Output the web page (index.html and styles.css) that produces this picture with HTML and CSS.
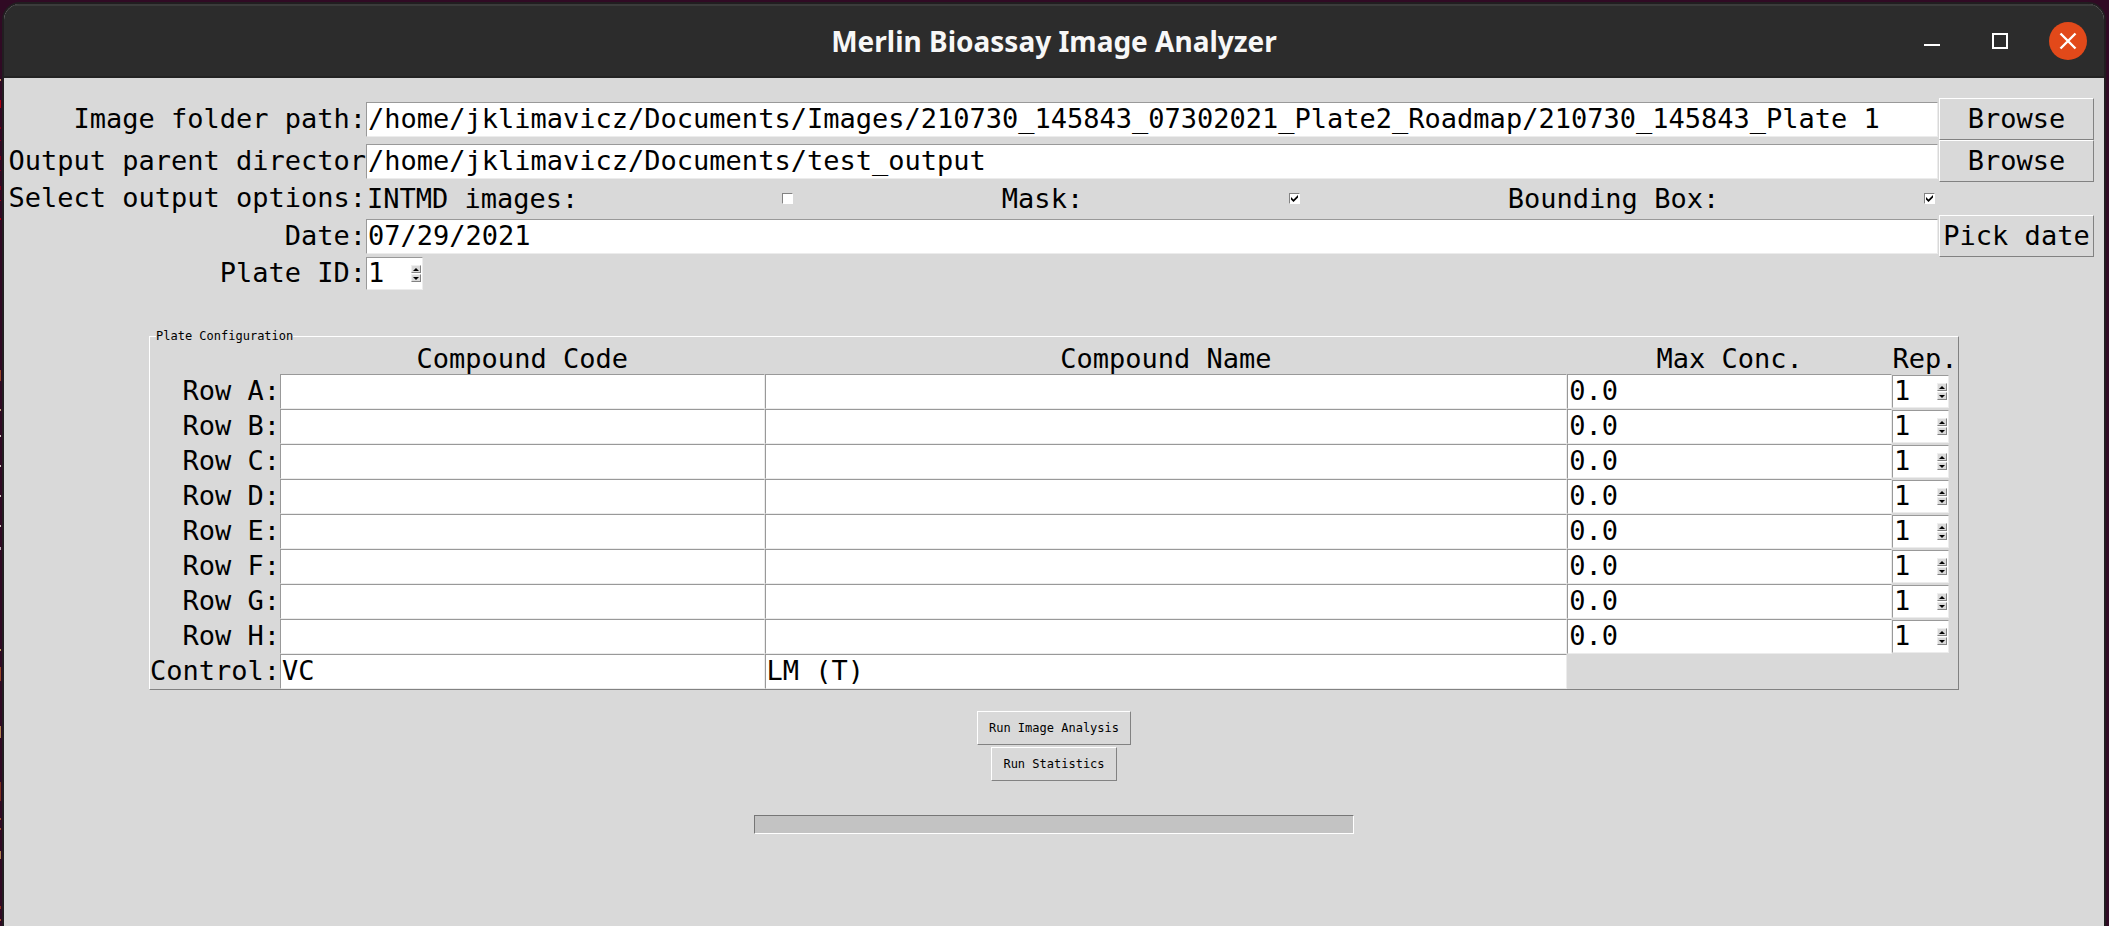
FILE: index.html
```
<!DOCTYPE html>
<html lang="en">
<head>
<meta charset="utf-8">
<title>Merlin Bioassay Image Analyzer</title>
<link rel="stylesheet" href="styles.css">
</head>
<body class="desktop">
<div class="window">
  <header class="titlebar">
    <h1 class="title">Merlin Bioassay Image Analyzer</h1>
    <div class="window-controls">
      <button class="wm" type="button" aria-label="Minimize"><svg width="38" height="38" viewBox="0 0 38 38"><path d="M11 23h16" stroke="#fff" stroke-width="2"/></svg></button>
      <button class="wm" type="button" aria-label="Maximize"><svg width="38" height="38" viewBox="0 0 38 38"><path d="M12 12h14v14h-14z" fill="none" stroke="#fff" stroke-width="2"/></svg></button>
      <button class="wm wm-close" type="button" aria-label="Close"><svg width="38" height="38" viewBox="0 0 38 38"><path d="M11.500 11.500l15 15M26.500 11.500l-15 15" stroke="#fff" stroke-width="2.400"/></svg></button>
    </div>
  </header>
  <main class="content">
    <form class="settings">
      <label class="field-label" for="folder">Image folder path:</label>
      <input class="entry" id="folder" type="text" value="/home/jklimavicz/Documents/Images/210730_145843_07302021_Plate2_Roadmap/210730_145843_Plate 1">
      <button class="btn" type="button">Browse</button>

      <label class="field-label" for="output">Output parent director</label>
      <input class="entry" id="output" type="text" value="/home/jklimavicz/Documents/test_output">
      <button class="btn" type="button">Browse</button>

      <span class="field-label">Select output options:</span>
      <div class="options">
        <div class="option option-first"><label for="intmd">INTMD images:</label><input class="check" id="intmd" type="checkbox"></div>
        <div class="option"><label for="mask">Mask:</label><input class="check" id="mask" type="checkbox" checked></div>
        <div class="option"><label for="bbox">Bounding Box:</label><input class="check" id="bbox" type="checkbox" checked></div>
      </div>
      <span></span>

      <label class="field-label" for="date">Date:</label>
      <input class="entry" id="date" type="text" value="07/29/2021">
      <button class="btn" type="button">Pick date</button>

      <label class="field-label" for="plate">Plate ID:</label>
      <span class="spin"><input id="plate" type="number" value="1"><span class="arrows"><button class="up" type="button" aria-label="Increase"></button><button class="down" type="button" aria-label="Decrease"></button></span></span>
    </form>

    <fieldset class="plate">
      <legend>Plate Configuration</legend>
      <table class="plate-table">
        <colgroup><col class="col-row"><col class="col-code"><col class="col-name"><col class="col-conc"><col class="col-rep"></colgroup>
        <thead><tr><td></td><th scope="col">Compound Code</th><th scope="col">Compound Name</th><th scope="col">Max Conc.</th><th scope="col">Rep.</th></tr></thead>
        <tbody>
          <tr><th scope="row">Row A:</th><td><input class="entry" type="text" aria-label="Row A code"></td><td><input class="entry" type="text" aria-label="Row A name"></td><td><input class="entry" type="text" aria-label="Row A max conc." value="0.0"></td><td><span class="spin"><input type="number" aria-label="Row A rep." value="1"><span class="arrows"><button class="up" type="button" aria-label="Increase"></button><button class="down" type="button" aria-label="Decrease"></button></span></span></td></tr>
          <tr><th scope="row">Row B:</th><td><input class="entry" type="text" aria-label="Row B code"></td><td><input class="entry" type="text" aria-label="Row B name"></td><td><input class="entry" type="text" aria-label="Row B max conc." value="0.0"></td><td><span class="spin"><input type="number" aria-label="Row B rep." value="1"><span class="arrows"><button class="up" type="button" aria-label="Increase"></button><button class="down" type="button" aria-label="Decrease"></button></span></span></td></tr>
          <tr><th scope="row">Row C:</th><td><input class="entry" type="text" aria-label="Row C code"></td><td><input class="entry" type="text" aria-label="Row C name"></td><td><input class="entry" type="text" aria-label="Row C max conc." value="0.0"></td><td><span class="spin"><input type="number" aria-label="Row C rep." value="1"><span class="arrows"><button class="up" type="button" aria-label="Increase"></button><button class="down" type="button" aria-label="Decrease"></button></span></span></td></tr>
          <tr><th scope="row">Row D:</th><td><input class="entry" type="text" aria-label="Row D code"></td><td><input class="entry" type="text" aria-label="Row D name"></td><td><input class="entry" type="text" aria-label="Row D max conc." value="0.0"></td><td><span class="spin"><input type="number" aria-label="Row D rep." value="1"><span class="arrows"><button class="up" type="button" aria-label="Increase"></button><button class="down" type="button" aria-label="Decrease"></button></span></span></td></tr>
          <tr><th scope="row">Row E:</th><td><input class="entry" type="text" aria-label="Row E code"></td><td><input class="entry" type="text" aria-label="Row E name"></td><td><input class="entry" type="text" aria-label="Row E max conc." value="0.0"></td><td><span class="spin"><input type="number" aria-label="Row E rep." value="1"><span class="arrows"><button class="up" type="button" aria-label="Increase"></button><button class="down" type="button" aria-label="Decrease"></button></span></span></td></tr>
          <tr><th scope="row">Row F:</th><td><input class="entry" type="text" aria-label="Row F code"></td><td><input class="entry" type="text" aria-label="Row F name"></td><td><input class="entry" type="text" aria-label="Row F max conc." value="0.0"></td><td><span class="spin"><input type="number" aria-label="Row F rep." value="1"><span class="arrows"><button class="up" type="button" aria-label="Increase"></button><button class="down" type="button" aria-label="Decrease"></button></span></span></td></tr>
          <tr><th scope="row">Row G:</th><td><input class="entry" type="text" aria-label="Row G code"></td><td><input class="entry" type="text" aria-label="Row G name"></td><td><input class="entry" type="text" aria-label="Row G max conc." value="0.0"></td><td><span class="spin"><input type="number" aria-label="Row G rep." value="1"><span class="arrows"><button class="up" type="button" aria-label="Increase"></button><button class="down" type="button" aria-label="Decrease"></button></span></span></td></tr>
          <tr><th scope="row">Row H:</th><td><input class="entry" type="text" aria-label="Row H code"></td><td><input class="entry" type="text" aria-label="Row H name"></td><td><input class="entry" type="text" aria-label="Row H max conc." value="0.0"></td><td><span class="spin"><input type="number" aria-label="Row H rep." value="1"><span class="arrows"><button class="up" type="button" aria-label="Increase"></button><button class="down" type="button" aria-label="Decrease"></button></span></span></td></tr>
          <tr><th scope="row">Control:</th><td><input class="entry" type="text" aria-label="Control code" value="VC"></td><td><input class="entry" type="text" aria-label="Control name" value="LM (T)"></td><td></td><td></td></tr>
        </tbody>
      </table>
    </fieldset>

    <div class="actions">
      <button class="btn btn-small" type="button">Run Image Analysis</button>
      <button class="btn btn-small" type="button">Run Statistics</button>
    </div>
    <progress class="progress" value="0" max="100" aria-label="Progress"></progress>
  </main>
</div>
</body>
</html>
```
FILE: styles.css
```
* { box-sizing: border-box; }

.desktop {
  margin: 0;
  min-height: 100vh;
  display: flex;
  padding: 2px 3px 0 2px;
  background-color: #300a24;
  /* slivers of the terminal text behind the window */
  background-image: linear-gradient(#0000 79px, #c08a60 79px 81px, #0000 81px 100px, #b00010 100px 108px, #0000 108px 127px, #80001a 127px 129px, #0000 129px 140px, #80001a 140px 141px, #0000 141px 156px, #80001a 156px 160px, #0000 160px 170px, #80001a 170px 171px, #0000 171px 186px, #80001a 186px 190px, #0000 190px 200px, #a00010 200px 201px, #0000 201px 218px, #b00010 218px 220px, #0000 220px 370px, #984528 370px 381px, #0000 381px 409px, #c0a080 409px 411px, #0000 411px 435px, #d0c8c0 435px 437px, #0000 437px 465px, #d0c8c0 465px 467px, #0000 467px 495px, #d0c8c0 495px 497px, #0000 497px 525px, #d0c8c0 525px 527px, #0000 527px 547px, #b8a8b0 547px 550px, #0000 550px 649px, #c0a060 649px 651px, #0000 651px 667px, #984528 667px 681px, #0000 681px 726px, #b08050 726px 738px, #0000 738px 782px, #803020 782px 801px, #0000 801px 818px, #a05030 818px 820px, #0000 820px 828px, #a05030 828px 830px, #0000 830px 851px, #b08050 851px 859px, #0000 859px 906px, #903020 906px 909px, #0000 909px 919px, #a05030 919px 921px, #0000 921px);
  background-size: 1px 100%;
  background-repeat: no-repeat;
  font-family: "DejaVu Sans Mono", "Liberation Mono", monospace;
  font-size: 27px;
  color: #000;
}

.window {
  flex: 1;
  display: flex;
  flex-direction: column;
  border: 2px solid #211d20;
  border-bottom: 0;
  border-radius: 18px 18px 0 0;
  overflow: hidden;
  background: #d9d9d9;
}

.titlebar {
  display: grid;
  grid-template-columns: 1fr auto 1fr;
  align-items: center;
  height: 74px;
  padding: 0 17px;
  background: #2c2c2c;
  border-top: 2px solid #3b3b3b;
  border-bottom: 2px solid #232323;
}

.title {
  grid-column: 2;
  margin: 0;
  font: 700 28px/36px "Noto Sans", "Open Sans", sans-serif;
  color: #f7f7f7;
}

.window-controls { display: flex; justify-content: flex-end; gap: 30px; }

.wm {
  width: 38px;
  height: 38px;
  padding: 0;
  border: 0;
  border-radius: 50%;
  background: none;
}

.wm svg { display: block; }
.wm-close { background: #e2491a; }

.content { flex: 1; padding: 20px 10px 0; }

.settings {
  display: grid;
  grid-template-columns: 352px 1fr 156px;
  align-items: center;
}

.field-label {
  display: flex;
  justify-content: flex-end;
  padding-bottom: 2px;
  white-space: nowrap;
  line-height: 31px;
}

.entry {
  display: block;
  width: 100%;
  height: 35px;
  padding: 0 1px 2px;
  border: 1px solid;
  border-color: #999 #ececec #ececec #999;
  border-radius: 0;
  background: #fff;
  font: inherit;
  color: inherit;
}

.btn {
  height: 42px;
  margin-left: 1px;
  padding: 0 0 2px;
  border: 1px solid;
  border-color: #fff #828282 #828282 #fff;
  border-radius: 0;
  background: #d9d9d9;
  font: inherit;
  color: inherit;
  white-space: nowrap;
}

.options {
  display: grid;
  grid-template-columns: 430fr 507fr 635fr;
  line-height: 33px;
}

.option { display: flex; align-items: center; padding-right: 3px; }
.option label { flex: 1; text-align: center; }
.option-first label { text-align: left; padding-left: 1px; }

.check {
  appearance: none;
  width: 11px;
  height: 11px;
  margin: 0;
  border: 1px solid;
  border-color: #828282 #fff #fff #828282;
  background: #fff;
}

.check:checked {
  background: #fff url("data:image/svg+xml,%3Csvg xmlns='http://www.w3.org/2000/svg' viewBox='0 0 9 9'%3E%3Cpath d='M1 3l2.500 2.500L8 1v2.500L3.500 8 1 5.500z'/%3E%3C/svg%3E") center / 9px 9px no-repeat;
}

.spin {
  display: flex;
  align-items: center;
  width: 57px;
  height: 33px;
  padding-right: 1px;
  border: 1px solid;
  border-color: #999 #ececec #ececec #999;
  background: #fff;
}

.spin input {
  flex: 1;
  min-width: 0;
  height: 31px;
  padding: 0 1px 2px;
  border: 0;
  background: none;
  font: inherit;
  color: inherit;
  appearance: textfield;
}

.spin input::-webkit-inner-spin-button { appearance: none; }

.arrows { display: flex; flex-direction: column; gap: 1px; }

.arrows button {
  display: flex;
  align-items: center;
  justify-content: center;
  width: 10px;
  height: 8px;
  padding: 0;
  border: 1px solid;
  border-color: #eee #828282 #828282 #eee;
  background: #d9d9d9;
}

.arrows button::before {
  content: "";
  border: solid transparent;
  border-width: 0 3px;
}

.arrows .up::before { border-bottom: 3px solid #000; }
.arrows .down::before { border-top: 3px solid #000; }

.plate {
  min-width: 0;
  margin: 39px 135px 0;
  padding: 0;
  border: 1px solid;
  border-color: #fff #828282 #828282 #fff;
}

.plate legend {
  margin-left: 6px;
  padding: 0;
  font-size: 12px;
  line-height: 14px;
}

.plate-table {
  width: 100%;
  table-layout: fixed;
  border-collapse: collapse;
}

.plate-table th,
.plate-table td {
  height: 35px;
  padding: 0;
  font-weight: 400;
  line-height: 31px;
  white-space: nowrap;
}

.plate-table thead th,
.plate-table thead td { height: 31px; }
.plate-table tbody th { padding-bottom: 2px; text-align: right; }
.col-row { width: 130px; }
.col-code { width: 26.8%; }
.col-name { width: 44.4%; }
.col-rep { width: 66px; }

.actions {
  display: flex;
  flex-direction: column;
  align-items: center;
  gap: 2px;
  margin-top: 21px;
}

.btn-small {
  height: 34px;
  margin: 0;
  padding: 0 11px;
  font-size: 12px;
}

.progress {
  appearance: none;
  display: block;
  width: 600px;
  max-width: 100%;
  height: 19px;
  margin: 34px auto 0;
  border: 1px solid;
  border-color: #767676 #fff #fff #767676;
  background: #c3c3c3;
}

.progress::-webkit-progress-bar { background: #c3c3c3; }
```
